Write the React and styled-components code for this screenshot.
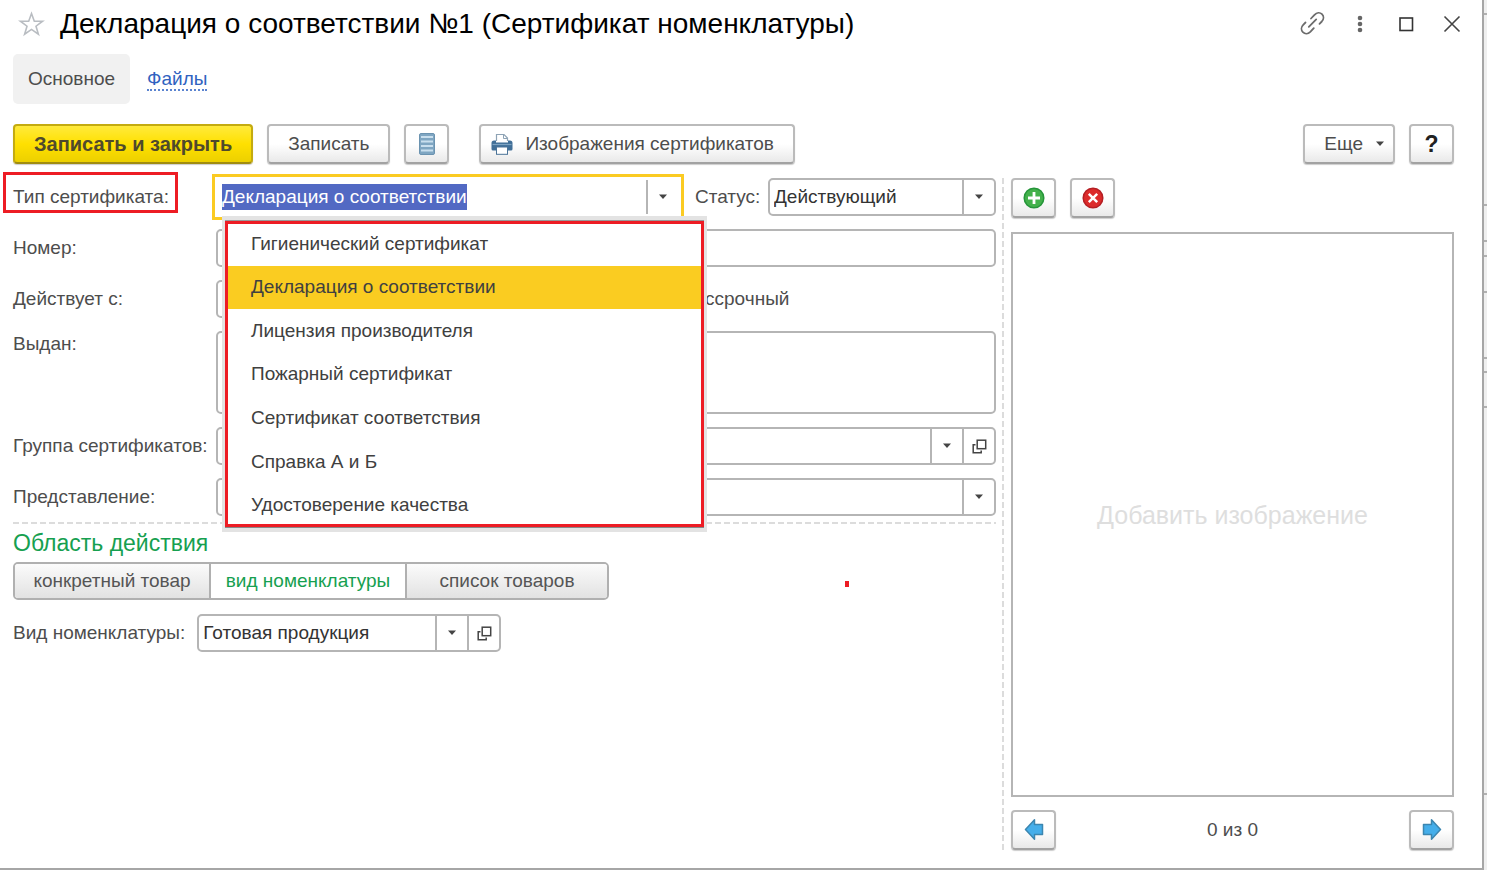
import { useEffect, useRef, useState } from 'react'
import styled, { createGlobalStyle, css } from 'styled-components'

const GlobalStyle = createGlobalStyle`
  * {
    box-sizing: border-box;
  }

  body {
    margin: 0;
    background: #fff;
    color: #4d4d4d;
    font: 19px/26px 'Liberation Sans', Arial, sans-serif;
  }

  button, input, select, textarea {
    font: inherit;
    color: inherit;
  }
`

const Screen = styled.div`
  display: flex;
  min-height: 100vh;
`

const Window = styled.main`
  flex: 1;
  min-width: 0;
  display: flex;
  flex-direction: column;
  padding: 0 28px 18px 13px;
  border-right: 2px solid #a6a6a6;
  border-bottom: 2px solid #a6a6a6;
`

const Backdrop = styled.div`
  width: 3px;
  display: flex;
  flex-direction: column;
  background: #efefef;
`

const BackdropRow = styled.div`
  height: ${({ $height }) => $height}px;
  border-bottom: 2px solid #b0b0b0;
`

const TitleBar = styled.header`
  display: flex;
  align-items: center;
  height: 48px;
  padding-left: 5px;
`

const Title = styled.h1`
  flex: 1;
  margin: 0 0 0 15px;
  font-size: 28px;
  line-height: 32px;
  font-weight: 400;
  color: #000;
`

const IconButton = styled.button`
  display: flex;
  padding: 0;
  border: none;
  background: none;
  color: #555;
  cursor: pointer;
`

const WindowControls = styled.div`
  display: flex;
  align-items: center;
  gap: 22px;
  margin-right: -10px;
`

const Tabs = styled.nav`
  display: flex;
  align-items: baseline;
  gap: 17px;
  margin-top: 6px;
`

const ActiveTab = styled.span`
  padding: 12px 15px;
  border-radius: 5px;
  background: #f1f1f1;
`

const TabLink = styled.a`
  line-height: 20px;
  color: #2f62c0;
  text-decoration: none;
  border-bottom: 2px dotted #5b84d0;
`

const Toolbar = styled.div`
  display: flex;
  gap: 14px;
  margin: 20px 0 14px;
`

const Spacer = styled.div`
  flex: ${({ $width }) => ($width ? `0 0 ${$width}px` : 1)};
`

const Button = styled.button`
  display: flex;
  align-items: center;
  justify-content: center;
  gap: 12px;
  height: 40px;
  min-width: 45px;
  padding: ${({ $pad }) => $pad || 0};
  border: 2px solid #bbb;
  border-bottom-color: #a2a2a2;
  border-radius: 4px;
  background: linear-gradient(#fff 50%, #e9e9e9);
  box-shadow: 0 1px 1px #ccc;
  white-space: nowrap;
  cursor: pointer;

  ${({ $primary }) => $primary && css`
    border-color: #c4ab10;
    border-bottom-color: #a08c10;
    background: linear-gradient(#ffea3c, #ffe000 50%, #ecd000);
    font-size: 20px;
    font-weight: 700;
    color: #4f4a2c;
  `}
`

const HelpMark = styled.span`
  font-size: 23px;
  font-weight: 700;
  color: #222;
`

const Body = styled.div`
  flex: 1;
  display: grid;
  grid-template-columns: minmax(0, 983fr) minmax(0, 458fr);
`

const Form = styled.form`
  display: flex;
  flex-direction: column;
`

const Fields = styled.div`
  display: flex;
  flex-direction: column;
  gap: 13px;
`

const Row = styled.div`
  display: flex;
  align-items: ${({ $top }) => ($top ? 'flex-start' : 'center')};
`

const LabelCell = styled.div`
  flex: 0 0 203px;
`

const Label = styled.label`
  position: relative;
  white-space: nowrap;
`

const Mark = styled.span`
  position: absolute;
  inset: -14px -9px -6px -10px;
  border: 3px solid #ed1c24;
  pointer-events: none;
`

const Field = styled.div`
  position: relative;
  display: flex;
  flex: ${({ $width }) => ($width ? `0 0 ${$width}px` : 1)};
  height: 38px;
  border: 2px solid #b5b5b5;
  border-radius: 5px;
  background: #fff;
  color: #333;

  ${({ $focused }) => $focused && css`
    border-color: #fff;
    border-radius: 0;
    box-shadow: 0 0 0 1px #fff, 0 0 0 4px #fbcb22;
  `}
`

const inputStyle = css`
  flex: 1;
  width: 100%;
  min-width: 0;
  padding: 0 4px;
  border: none;
  outline: none;
  background: none;
`

const TextInput = styled.input`
  ${inputStyle}

  &::selection {
    background: #5269c3;
    color: #fff;
  }
`

const Select = styled.select`
  ${inputStyle}
  appearance: none;
`

const TextArea = styled.textarea`
  flex: 1;
  height: 83px;
  border: 2px solid #b5b5b5;
  border-radius: 5px;
  outline: none;
  resize: none;
`

const FieldButton = styled.button`
  display: flex;
  align-items: center;
  justify-content: center;
  flex: 0 0 32px;
  padding: 0;
  border: none;
  border-left: 2px solid #b5b5b5;
  background: none;
  color: #444;
  cursor: pointer;
`

const StatusLabel = styled(Label)`
  flex: 0 0 73px;
  margin-left: 15px;
`

const Menu = styled.ul`
  position: absolute;
  z-index: 2;
  top: 41px;
  left: 7px;
  right: -26px;
  height: 306px;
  display: grid;
  grid-auto-rows: 1fr;
  margin: 0;
  padding: 1px 0 0;
  list-style: none;
  background: #fff;
  box-shadow: 0 1px #888, 0 -1px #999, 0 2px 0 3px #e3e3e3, 0 -2px 0 3px #e3e3e3;

  &::after {
    content: '';
    position: absolute;
    inset: 0;
    border: 3px solid #ed1c24;
    pointer-events: none;
  }
`

const MenuItem = styled.li`
  display: flex;
  align-items: center;
  padding-left: 26px;
  background: ${({ $active }) => ($active ? '#facc21' : '#fff')};
  color: #404040;
  cursor: pointer;
`

const DateRange = styled.div`
  display: flex;
  gap: 14px;
`

const CheckLabel = styled.label`
  display: flex;
  align-items: center;
  gap: 8px;
  margin-left: 14px;

  input {
    width: 18px;
    height: 18px;
    margin: 0;
  }
`

const DashedLine = styled.hr`
  width: 100%;
  height: 2px;
  margin: 6px 0;
  border: none;
  background: repeating-linear-gradient(90deg, #dcdcdc 0 6px, transparent 6px 9px);
`

const SectionTitle = styled.h2`
  margin: 0 0 6px;
  font-size: 23px;
  line-height: 26px;
  font-weight: 400;
  color: #16a050;
`

const Segments = styled.div`
  display: grid;
  grid-template-columns: 194px 196px 202px;
  height: 38px;
  border: 2px solid #b0b0b0;
  border-radius: 5px;
  overflow: hidden;
`

const Segment = styled.label`
  display: flex;
  align-items: center;
  justify-content: center;
  border-left: ${({ $first }) => ($first ? 'none' : '2px solid #b0b0b0')};
  background: ${({ $active }) => ($active ? '#fff' : 'linear-gradient(#fbfbfb, #e2e2e2)')};
  color: ${({ $active }) => ($active ? '#16a050' : '#555')};
  cursor: pointer;

  input {
    position: absolute;
    opacity: 0;
    pointer-events: none;
  }
`

const RedDot = styled.span`
  width: 4px;
  height: 6px;
  margin: 6px 0 0 236px;
  background: #ed1c24;
`

const KindRow = styled(Row)`
  margin-top: 14px;
  gap: 12px;
`

const ImagePane = styled.section`
  display: flex;
  flex-direction: column;
  padding-left: 9px;
  margin-left: 6px;
  background: repeating-linear-gradient(#dcdcdc 0 6px, transparent 6px 9px) left / 2px 100% no-repeat;
`

const ImageTools = styled.div`
  display: flex;
  align-items: center;
  justify-content: ${({ $spread }) => ($spread ? 'space-between' : 'flex-start')};
  gap: 14px;
`

const ImageBox = styled.div`
  flex: 1;
  display: flex;
  align-items: center;
  justify-content: center;
  margin: 14px 0 13px;
  border: 2px solid #b5b5b5;
  font-size: 25px;
  color: #dedede;
`

const StarIcon = () => (
  <svg width="27" height="26" viewBox="0 0 27 26" fill="none" stroke="#b9bdc2" strokeWidth="1.6">
    <path d="M13.5 2.5 16.3 10.2H24.6L18 15.2 20.4 23.2 13.5 18.4 6.6 23.2 9 15.2 2.4 10.2H10.7Z" />
  </svg>
)

const LinkIcon = () => (
  <svg width="26" height="26" viewBox="0 0 26 26" fill="none" stroke="#6c6c6c" strokeWidth="1.8" strokeLinecap="round">
    <path d="M11 7.500 14.500 3.800C16.800 1.400 20 1.300 22 3.200 24 5.200 23.900 8.300 21.800 10.500L19.500 12.800" />
    <path d="M5.500 11.500 3.200 13.800C1 16 1 19.200 2.900 21.200 4.900 23.200 8 23.100 10.300 20.900L13.800 17.200" />
    <path d="M8.800 15.800 16.200 8.400" />
  </svg>
)

const DotsIcon = () => (
  <svg width="24" height="24" viewBox="0 0 24 24" fill="#666">
    <circle cx="12" cy="6" r="2.3" />
    <circle cx="12" cy="12" r="2.3" />
    <circle cx="12" cy="18" r="2.3" />
  </svg>
)

const MaximizeIcon = () => (
  <svg width="24" height="24" viewBox="0 0 24 24" fill="none" stroke="#333" strokeWidth="1.6">
    <rect x="6" y="6" width="12.5" height="12.5" />
  </svg>
)

const CloseIcon = () => (
  <svg width="24" height="24" viewBox="0 0 24 24" fill="none" stroke="#444" strokeWidth="1.6">
    <path d="M4.500 4.500 19.500 19.500M19.500 4.500 4.500 19.500" />
  </svg>
)

const ListIcon = () => (
  <svg width="16" height="22" viewBox="0 0 16 22">
    <rect x="0.500" y="0.500" width="15" height="21" rx="1.500" fill="#7fa6c2" stroke="#6b93b0" />
    <path d="M2 4H14M2 8.500H14M2 13H14M2 17.500H14" stroke="#c9dfee" strokeWidth="2" />
  </svg>
)

const PrinterIcon = () => (
  <svg width="22" height="22" viewBox="0 0 22 22">
    <path d="M5.500 8V1.500H13L16.500 5V8" fill="#fff" stroke="#8ea3b5" strokeWidth="1.200" />
    <path d="M12.500 1.500V5.500H16.500" fill="none" stroke="#8ea3b5" />
    <path d="M3 7.500H5V9.500H17V7.500H19Q21.500 7.500 21.500 10V16Q21.500 17.500 20 17.500H2Q0.500 17.500 0.500 16V10Q0.500 7.500 3 7.500Z" fill="#416f98" />
    <path d="M1.500 11.500H20.500" stroke="#7ea3c2" strokeWidth="1.200" />
    <rect x="5.500" y="14" width="11" height="7.300" fill="#fff" stroke="#4a7398" />
  </svg>
)

const ArrowDown = () => (
  <svg width="10" height="6" viewBox="0 0 10 6" fill="#444">
    <path d="M1 0.500H9L5 5Z" />
  </svg>
)

const OpenIcon = () => (
  <svg width="15" height="15" viewBox="0 0 15 15" fill="none" stroke="#444" strokeWidth="1.500">
    <rect x="5.200" y="1.200" width="8.500" height="8.500" />
    <path d="M3.500 5.700H1.200V13.700H9.200V11.500" />
  </svg>
)

const AddIcon = () => (
  <svg width="22" height="22" viewBox="0 0 22 22">
    <circle cx="11" cy="11" r="9.800" fill="#43b14b" stroke="#26953a" strokeWidth="1.500" />
    <path d="M11 5V17M5 11H17" stroke="#fff" strokeWidth="2.800" />
  </svg>
)

const DeleteIcon = () => (
  <svg width="22" height="22" viewBox="0 0 22 22">
    <circle cx="11" cy="11" r="9.800" fill="#dc2b2b" stroke="#b51f24" strokeWidth="1.500" />
    <path d="M6.800 6.800 15.200 15.200M15.200 6.800 6.800 15.200" stroke="#fff" strokeWidth="2.500" />
  </svg>
)

const BlueArrow = ({ flip }) => (
  <svg width="20" height="22" viewBox="0 0 20 22">
    <path
      d="M1.500 10.500 10.500 0.800V5.500H18.500V15.500H10.500V20.200Z"
      transform={flip ? 'matrix(-1 0 0 1 20 0)' : undefined}
      fill="#45aeea"
      stroke="#3c86b0"
      strokeWidth="1.500"
      strokeLinejoin="round"
    />
  </svg>
)

const certificateTypes = [
  'Гигиенический сертификат',
  'Декларация о соответствии',
  'Лицензия производителя',
  'Пожарный сертификат',
  'Сертификат соответствия',
  'Справка А и Б',
  'Удостоверение качества',
]

const scopes = ['конкретный товар', 'вид номенклатуры', 'список товаров']

const backdropRows = [15, 191, 36, 15, 36, 66, 14, 35, 387]

const DropButton = () => (
  <FieldButton type="button" aria-label="Выбрать">
    <ArrowDown />
  </FieldButton>
)

const OpenButton = () => (
  <FieldButton type="button" aria-label="Открыть">
    <OpenIcon />
  </FieldButton>
)

const TypeCombo = () => {
  const [type, setType] = useState(certificateTypes[1])
  const inputRef = useRef(null)

  useEffect(() => {
    inputRef.current.focus()
    inputRef.current.select()
  }, [])

  return (
    <Field $focused>
      <TextInput
        id="type"
        ref={inputRef}
        role="combobox"
        aria-expanded="true"
        aria-controls="type-list"
        value={type}
        onChange={(e) => setType(e.target.value)}
      />
      <DropButton />
      <Menu id="type-list" role="listbox">
        {certificateTypes.map((item) => (
          <MenuItem
            key={item}
            role="option"
            aria-selected={item === type}
            $active={item === type}
            onClick={() => setType(item)}
          >
            {item}
          </MenuItem>
        ))}
      </Menu>
    </Field>
  )
}

const App = () => {
  const [scope, setScope] = useState(scopes[1])

  return (
    <Screen>
      <GlobalStyle />
      <Window>
        <TitleBar>
          <IconButton type="button" aria-label="В избранное"><StarIcon /></IconButton>
          <Title>Декларация о соответствии №1 (Сертификат номенклатуры)</Title>
          <WindowControls>
            <IconButton type="button" aria-label="Ссылка"><LinkIcon /></IconButton>
            <IconButton type="button" aria-label="Меню"><DotsIcon /></IconButton>
            <IconButton type="button" aria-label="Развернуть"><MaximizeIcon /></IconButton>
            <IconButton type="button" aria-label="Закрыть"><CloseIcon /></IconButton>
          </WindowControls>
        </TitleBar>

        <Tabs>
          <ActiveTab>Основное</ActiveTab>
          <TabLink href="#files">Файлы</TabLink>
        </Tabs>

        <Toolbar>
          <Button type="button" $primary $pad="0 19px">Записать и закрыть</Button>
          <Button type="button" $pad="0 19px">Записать</Button>
          <Button type="button" aria-label="Список"><ListIcon /></Button>
          <Spacer $width={2} />
          <Button type="button" $pad="0 19px 0 10px">
            <PrinterIcon />
            Изображения сертификатов
          </Button>
          <Spacer />
          <Button type="button" $pad="0 8px 0 19px">
            Еще
            <ArrowDown />
          </Button>
          <Button type="button" aria-label="Справка"><HelpMark>?</HelpMark></Button>
        </Toolbar>

        <Body>
          <Form>
            <Fields>
              <Row>
                <LabelCell>
                  <Label htmlFor="type">Тип сертификата:<Mark /></Label>
                </LabelCell>
                <TypeCombo />
                <StatusLabel htmlFor="status">Статус:</StatusLabel>
                <Field $width={228}>
                  <Select id="status"><option>Действующий</option></Select>
                  <DropButton />
                </Field>
              </Row>
              <Row>
                <LabelCell><Label htmlFor="number">Номер:</Label></LabelCell>
                <Field><TextInput id="number" /></Field>
              </Row>
              <Row>
                <LabelCell><Label htmlFor="from">Действует с:</Label></LabelCell>
                <DateRange>
                  <Field $width={206}><TextInput id="from" /></Field>
                  <Field $width={206}><TextInput aria-label="Действует по" /></Field>
                </DateRange>
                <CheckLabel><input type="checkbox" />Бессрочный</CheckLabel>
              </Row>
              <Row $top>
                <LabelCell><Label htmlFor="issued">Выдан:</Label></LabelCell>
                <TextArea id="issued" />
              </Row>
              <Row>
                <LabelCell><Label htmlFor="group">Группа сертификатов:</Label></LabelCell>
                <Field>
                  <Select id="group" />
                  <DropButton />
                  <OpenButton />
                </Field>
              </Row>
              <Row>
                <LabelCell><Label htmlFor="view">Представление:</Label></LabelCell>
                <Field>
                  <Select id="view" />
                  <DropButton />
                </Field>
              </Row>
            </Fields>

            <DashedLine />
            <SectionTitle>Область действия</SectionTitle>
            <Row>
              <Segments>
                {scopes.map((item, i) => (
                  <Segment key={item} $first={i === 0} $active={item === scope}>
                    <input
                      type="radio"
                      name="scope"
                      checked={item === scope}
                      onChange={() => setScope(item)}
                    />
                    {item}
                  </Segment>
                ))}
              </Segments>
              <RedDot />
            </Row>
            <KindRow>
              <Label htmlFor="kind">Вид номенклатуры:</Label>
              <Field $width={304}>
                <Select id="kind"><option>Готовая продукция</option></Select>
                <DropButton />
                <OpenButton />
              </Field>
            </KindRow>
          </Form>

          <ImagePane>
            <ImageTools>
              <Button type="button" aria-label="Добавить"><AddIcon /></Button>
              <Button type="button" aria-label="Удалить"><DeleteIcon /></Button>
            </ImageTools>
            <ImageBox>Добавить изображение</ImageBox>
            <ImageTools $spread>
              <Button type="button" aria-label="Назад"><BlueArrow /></Button>
              <span>0 из 0</span>
              <Button type="button" aria-label="Вперед"><BlueArrow flip /></Button>
            </ImageTools>
          </ImagePane>
        </Body>
      </Window>
      <Backdrop>
        {backdropRows.map((height, i) => (
          <BackdropRow key={i} $height={height} />
        ))}
      </Backdrop>
    </Screen>
  )
}

export default App
